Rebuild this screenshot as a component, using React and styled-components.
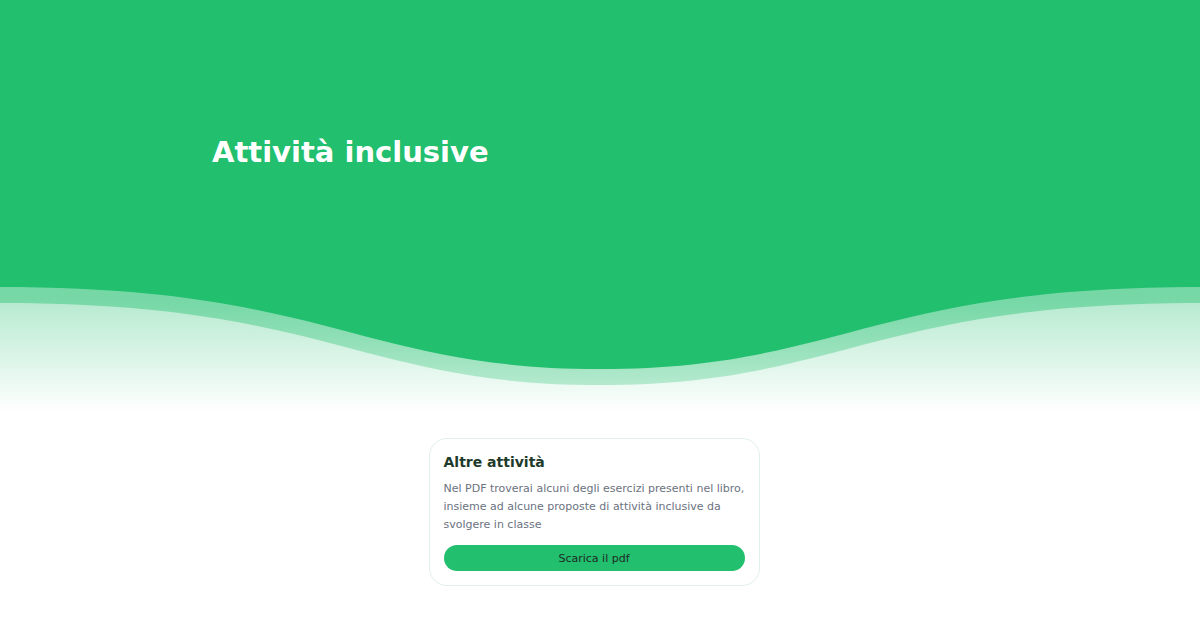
import React from 'react';
import styled, { createGlobalStyle } from 'styled-components';

const GREEN = '#21bf6e';

const GlobalStyle = createGlobalStyle`
  html, body {
    margin: 0;
    padding: 0;
    background: #fff;
    font-family: "DejaVu Sans", "Liberation Sans", sans-serif;
  }
  * { box-sizing: border-box; }
`;

const Page = styled.div`
  width: 1200px;
  min-height: 630px;
  background: #fff;
`;

const Hero = styled.section`
  background: ${GREEN};
  height: 287px;
  padding: 133px 0 0 212px;
`;

const HeroTitle = styled.h1`
  margin: 0;
  color: #fff;
  font-size: 29px;
  font-weight: 700;
  line-height: 38px;
`;

const Wave = styled.svg`
  display: block;
  width: 1200px;
  height: 130px;
`;

const CardArea = styled.div`
  display: flex;
  justify-content: center;
  padding: 21px 12px 0 0;
`;

const Card = styled.div`
  width: 331px;
  padding: 13px 14px 14px;
  border: 1px solid #dff1e8;
  border-radius: 18px;
  background: #fff;
`;

const CardTitle = styled.h2`
  margin: 0 0 8px;
  font-size: 14px;
  line-height: 20px;
  font-weight: 700;
  color: #1d3a2b;
`;

const CardText = styled.p`
  margin: 0 0 11px;
  font-size: 11px;
  line-height: 18px;
  color: #6b7280;
`;

const Button = styled.button`
  display: block;
  width: 100%;
  height: 26px;
  border: none;
  border-radius: 13px;
  background: ${GREEN};
  color: #1f2a24;
  font-family: inherit;
  font-size: 11px;
  cursor: pointer;
`;

// wave edge: flat at the sides, deepest in the middle
const curve = (top) =>
  `M0,0 L0,${top} C330,${top} 360,${top + 82} 600,${top + 82} C840,${top + 82} 870,${top} 1200,${top} L1200,0 Z`;

const HeroWave = () => (
  <Wave viewBox="0 0 1200 130" preserveAspectRatio="none">
    <defs>
      <linearGradient id="fade" x1="0" y1="16" x2="0" y2="125" gradientUnits="userSpaceOnUse">
        <stop offset="0" stopColor={GREEN} stopOpacity="0.32" />
        <stop offset="1" stopColor={GREEN} stopOpacity="0" />
      </linearGradient>
      <linearGradient id="band" x1="0" y1="0" x2="0" y2="98" gradientUnits="userSpaceOnUse">
        <stop offset="0" stopColor={GREEN} stopOpacity="0.45" />
        <stop offset="1" stopColor={GREEN} stopOpacity="0.28" />
      </linearGradient>
    </defs>
    <rect x="0" y="0" width="1200" height="130" fill="url(#fade)" />
    <path d={curve(16)} fill="url(#band)" />
    <path d={curve(0)} fill={GREEN} />
  </Wave>
);

export default function App() {
  return (
    <Page>
      <GlobalStyle />
      <Hero>
        <HeroTitle>Attività inclusive</HeroTitle>
      </Hero>
      <HeroWave />
      <CardArea>
        <Card>
          <CardTitle>Altre attività</CardTitle>
          <CardText>
            Nel PDF troverai alcuni degli esercizi presenti nel libro, insieme ad alcune proposte di attività inclusive da svolgere in classe
          </CardText>
          <Button>Scarica il pdf</Button>
        </Card>
      </CardArea>
    </Page>
  );
}
